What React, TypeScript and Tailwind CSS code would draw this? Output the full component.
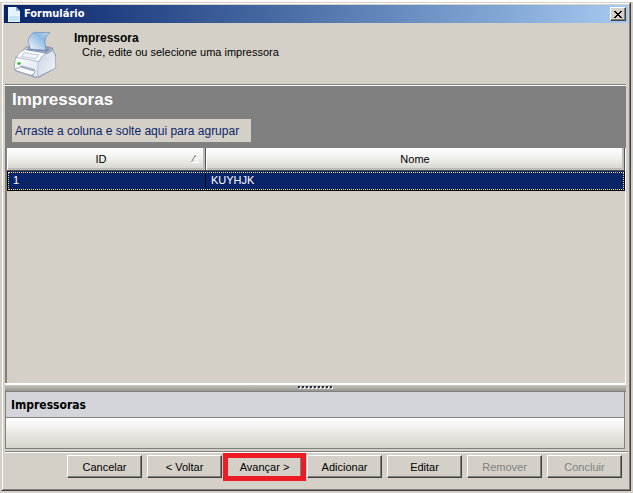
import type { ReactNode } from "react";

function PrinterIcon() {
  return (
    <svg width="44" height="50" viewBox="39 90 132 150" aria-hidden="true">
      <defs>
        <linearGradient id="sheet" x1="1" y1="0" x2="0" y2="1">
          <stop offset="0" stopColor="#c4dbf0" />
          <stop offset="0.35" stopColor="#8db9e2" />
          <stop offset="1" stopColor="#f6faff" />
        </linearGradient>
        <linearGradient id="front" x1="0" y1="0" x2="1" y2="1">
          <stop offset="0" stopColor="#ffffff" />
          <stop offset="1" stopColor="#dce3ed" />
        </linearGradient>
        <linearGradient id="side" x1="0" y1="0" x2="1" y2="1">
          <stop offset="0" stopColor="#c9d3e4" />
          <stop offset="1" stopColor="#f3f6fa" />
        </linearGradient>
      </defs>
      <path d="M47 174 L79 141 L148 141 Q160 150 166 164 L167 204 L117 231 L103 231 L44 208 Z" fill="#e9eef5" stroke="#7585a6" strokeWidth="3" strokeLinejoin="round" />
      <path d="M47 174 L114 184 L113 230 L44 207 Z" fill="url(#front)" />
      <path d="M114 184 Q128 158 151 146 Q164 155 166 169 L167 204 L113 230 Z" fill="url(#side)" stroke="#a3b0c8" strokeWidth="2" />
      <path d="M49 172 Q57 154 76 148 L143 157 Q125 165 116 185 Z" fill="#fbfcfe" stroke="#8c9ab4" strokeWidth="2" />
      <path d="M65 170 L72 158 L116 164 L107 177 Z" fill="#f0f3f8" stroke="#a8b4c9" strokeWidth="2" />
      <path d="M79 149 L89 141 L158 144 Q160 150 154 153 L141 160 Z" fill="#a9b6cb" stroke="#64748f" strokeWidth="2" />
      <path d="M85 149 L92 143 L150 147 L141 155 Z" fill="#7c8ba7" />
      <path d="M91 147 L84 125 Q88 103 103 97 L150 98 Q136 106 135 125 L137 151 Z" fill="url(#sheet)" stroke="#6689b5" strokeWidth="2" strokeLinejoin="round" />
      <path d="M58 205 L64 196 L105 208 L103 217 Z" fill="#a9b4c7" />
      <path d="M47 207 L61 201 L106 214 L100 225 L91 227 L47 213 Z" fill="#ffffff" stroke="#7b8aa6" strokeWidth="2" />
      <path d="M48 212 L93 226 L100 222" fill="none" stroke="#98a5bb" strokeWidth="3" />
      <circle cx="57" cy="190" r="5" fill="#24b832" />
      <circle cx="56" cy="188" r="2" fill="#91f26d" />
    </svg>
  );
}

function PageIcon() {
  return (
    <svg width="12" height="15" viewBox="0 0 12 15" aria-hidden="true">
      <path d="M0 0H8L12 4V15H0Z" fill="#e6f4ff" />
      <path d="M1 9H11V14H1Z" fill="#c4e3fa" />
      <path d="M8 0L12 4H8Z" fill="#7db5e4" />
    </svg>
  );
}

function WizardButton({ children, disabled = false, highlighted = false }: { children: ReactNode; disabled?: boolean; highlighted?: boolean }) {
  return (
    <div className="relative w-[75px]">
      <button
        type="button"
        disabled={disabled}
        className="block h-[23px] w-full border border-t-white border-l-white border-r-[#404040] border-b-[#404040] bg-[#d4d0c8] text-center shadow-[inset_-1px_-1px_0_#808080] disabled:text-[#808080]"
      >
        {children}
      </button>
      {highlighted && <div className="pointer-events-none absolute -inset-x-1 -top-0.5 -bottom-[3px] border-5 border-[#ed1c24]" />}
    </div>
  );
}

const columnHeader =
  "h-[23px] border-r border-b border-[#505458] bg-linear-to-b from-white via-[#efefec] to-[#d3d2cb] p-0 font-normal shadow-[inset_1px_0_0_#ffffff,inset_-2px_-2px_0_#bdbcb6]";

export default function App() {
  return (
    <div className="flex h-screen flex-col border-t-2 border-white bg-[#d4d0c8] pr-0.5 pb-0.5 pl-px font-['Liberation_Sans',Arial,sans-serif] text-[11px] leading-[14px] text-black">
      <div className="flex flex-1 flex-col border border-t-[#d4d0c8] border-l-[#d4d0c8] border-r-[#404040] border-b-[#404040]">
        <div className="flex flex-1 flex-col border border-t-white border-l-white border-r-[#808080] border-b-[#808080] p-px">
          <header className="flex h-[18px] items-center bg-linear-to-r from-[#0a246a] to-[#a6caf0] pr-0.5 pl-1">
            <PageIcon />
            <h1 className="ml-1 flex-1 font-['DejaVu_Sans_Condensed','DejaVu_Sans',sans-serif] text-[11px] font-bold text-white">Formulário</h1>
            <button
              type="button"
              aria-label="Fechar"
              className="flex h-[14px] w-4 items-center justify-center border border-t-white border-l-white border-r-[#404040] border-b-[#404040] bg-[#d4d0c8] shadow-[inset_-1px_-1px_0_#808080]"
            >
              <svg width="8" height="7" viewBox="0 0 8 7" shapeRendering="crispEdges" aria-hidden="true">
                <path d="M0 0h2v1h1v1h2v-1h1v-1h2v1h-1v1h-1v1h-1v1h1v1h1v1h1v1h-2v-1h-1v-1h-2v1h-1v1h-2v-1h1v-1h1v-1h1v-1h-1v-1h-1v-1h-1z" />
              </svg>
            </button>
          </header>

          <section className="flex h-[61px] pt-[7px] pl-[9px]">
            <PrinterIcon />
            <div className="pt-px pl-[17px]">
              <h2 className="text-[12px] font-bold">Impressora</h2>
              <p className="pl-2">Crie, edite ou selecione uma impressora</p>
            </div>
          </section>

          <main className="mr-0.5 ml-px flex flex-1 flex-col border-t border-[#808080]">
            <div className="h-[63px] border-t border-white bg-[#808080] pt-1.5 pl-[7px]">
              <h2 className="text-[17px] leading-4 font-bold text-white">Impressoras</h2>
              <p className="mt-[11px] h-[23px] w-[239px] bg-[#d4d0c8] pl-[3px] text-[12px] leading-[25px] text-[#0a246a]">Arraste a coluna e solte aqui para agrupar</p>
            </div>

            <div className="flex-1 border-r border-l-2 border-r-white border-l-[#808080]">
              <table className="w-full table-fixed border-separate border-spacing-0">
                <thead>
                  <tr>
                    <th scope="col" className={`${columnHeader} w-[199px]`}>
                      <div className="flex items-center pr-1.5">
                        <span className="flex-1 pl-1">ID</span>
                        <svg width="8" height="8" viewBox="0 0 8 8" aria-hidden="true">
                          <path d="M4 0.5L7.5 7.5H0" stroke="#ffffff" fill="none" />
                          <path d="M0.5 7L4 0.5L5 2" stroke="#808080" fill="none" />
                        </svg>
                      </div>
                    </th>
                    <th scope="col" className={columnHeader}>Nome</th>
                  </tr>
                </thead>
                <tbody>
                  <tr className="bg-[#0a246a] text-white outline-1 -outline-offset-2 outline-[#ffdf70] outline-dotted">
                    <td className="h-5 border border-t-0 border-black p-0 pb-0.5 pl-[5px]">1</td>
                    <td className="h-5 border-r border-b border-black p-0 pb-0.5 pl-[5px]">KUYHJK</td>
                  </tr>
                </tbody>
              </table>
            </div>

            <div className="flex h-[9px] justify-center border-t-2 border-b border-t-white border-b-[#808080] bg-linear-to-b from-[#c7c6bf] to-[#96968f]">
              <svg width="36" height="4" viewBox="0 0 36 4" shapeRendering="crispEdges" aria-hidden="true">
                {[0, 4, 8, 12, 16, 20, 24, 28, 32].map((x) => (
                  <g key={x}>
                    <path d={`M${x + 1} 2h2v2h-2z`} fill="#ffffff" />
                    <path d={`M${x} 1h2v2h-2z`} fill="#29304a" />
                  </g>
                ))}
              </svg>
            </div>
            <div className="mr-px border-r border-l border-[#808080]">
              <h2 className="h-[26px] border-b border-[#808080] bg-[#d4d5da] pl-[5px] font-['DejaVu_Sans_Condensed','DejaVu_Sans',sans-serif] text-[12px] leading-[26px] font-bold">Impressoras</h2>
              <div className="h-[31px] border-b border-[#808080] bg-linear-to-b from-white to-[#d5d4cb]" />
            </div>
          </main>

          <footer className="mt-0.5 ml-px flex h-[37px] items-start justify-end gap-[5px] border-t border-[#808080] pt-[3px] pr-1.5 shadow-[inset_0_1px_0_#ffffff]">
            <WizardButton>Cancelar</WizardButton>
            <WizardButton>&lt; Voltar</WizardButton>
            <WizardButton highlighted>Avançar &gt;</WizardButton>
            <WizardButton>Adicionar</WizardButton>
            <WizardButton>Editar</WizardButton>
            <WizardButton disabled>Remover</WizardButton>
            <WizardButton disabled>Concluir</WizardButton>
          </footer>
        </div>
      </div>
    </div>
  );
}
